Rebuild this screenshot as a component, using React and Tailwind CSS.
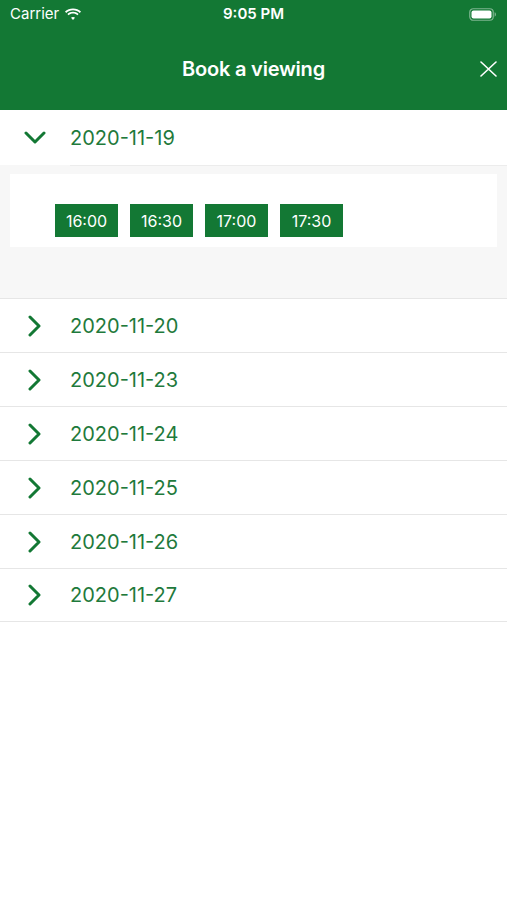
const slots = ["16:00", "16:30", "17:00", "17:30"];
const dates = ["2020-11-20", "2020-11-23", "2020-11-24", "2020-11-25", "2020-11-26", "2020-11-27"];

const Wifi = () => (
  <svg width="18" height="13" viewBox="0 0 18 13" fill="white">
    <path d="M9 2.2c2.6 0 5 1 6.8 2.7l1.2-1.3C14.9 1.6 12.1.4 9 .4S3.1 1.6 1 3.6l1.2 1.3C4 3.2 6.4 2.2 9 2.2z" />
    <path d="M9 5.6c1.7 0 3.2.6 4.4 1.7l1.2-1.3C13.1 4.6 11.1 3.8 9 3.8S4.9 4.6 3.4 6l1.2 1.3C5.8 6.2 7.3 5.6 9 5.6z" />
    <path d="M9 8.9c.8 0 1.5.3 2 .8L9 12 7 9.7c.5-.5 1.2-.8 2-.8z" />
  </svg>
);

const Battery = () => (
  <svg width="28" height="13" viewBox="0 0 28 13">
    <rect x="0.75" y="0.75" width="23.5" height="11.5" rx="3.5" fill="none" stroke="rgba(255,255,255,0.45)" strokeWidth="1.2" />
    <rect x="2.5" y="2.5" width="20" height="8" rx="2" fill="white" />
    <path d="M25.6 4.3v4.4c.9-.3 1.4-1.2 1.4-2.2s-.5-1.9-1.4-2.2z" fill="rgba(255,255,255,0.45)" />
  </svg>
);

const Close = () => (
  <svg width="17" height="16" viewBox="0 0 17 16" className="absolute right-[10px] top-[33px]">
    <path d="M1 1l15 14M16 1L1 15" stroke="white" strokeWidth="1.6" strokeLinecap="round" fill="none" />
  </svg>
);

const ChevDown = () => (
  <svg width="22" height="14" viewBox="0 0 22 14">
    <path d="M2 2l9 9 9-9" stroke="#137834" strokeWidth="3" strokeLinecap="round" strokeLinejoin="round" fill="none" />
  </svg>
);

const ChevRight = () => (
  <svg width="14" height="22" viewBox="0 0 14 22">
    <path d="M2 2l9 9-9 9" stroke="#137834" strokeWidth="3" strokeLinecap="round" strokeLinejoin="round" fill="none" />
  </svg>
);

export default function App() {
  return (
    <div className="w-[507px] h-[900px] bg-white flex flex-col" style={{ fontFamily: "Inter, 'Liberation Sans', sans-serif" }}>
      {/* header */}
      <div className="bg-[#137834] h-[110px] flex flex-col text-white">
        <div className="h-[28px] flex items-center justify-between px-[10px]">
          <div className="flex items-center gap-[5px] w-[120px] text-[15px]">
            <span>Carrier</span>
            <Wifi />
          </div>
          <span className="text-[15px] font-semibold">9:05 PM</span>
          <div className="w-[120px] flex justify-end">
            <Battery />
          </div>
        </div>
        <div className="flex-1 flex items-center justify-center relative">
          <span className="text-[20px] font-semibold tracking-[-0.2px]">Book a viewing</span>
          <Close />
        </div>
      </div>

      {/* expanded */}
      <div className="h-[55px] flex items-center">
        <div className="w-[70px] pl-[24px] flex">
          <ChevDown />
        </div>
        <span className="text-[20px] text-[#1f7a3c]">2020-11-19</span>
      </div>
      <div className="bg-[#f7f7f7] h-[133px] flex flex-col">
        <div className="h-px ml-[70px] bg-[#ececec]" />
        <div className="mx-[10px] mt-[8px] h-[73px] bg-white flex items-end gap-[12px] pl-[45px] pb-[10px]">
          {slots.map((s) => (
            <div key={s} className="w-[63px] h-[33px] bg-[#137834] text-white text-[16px] flex items-center justify-center">
              {s}
            </div>
          ))}
        </div>
      </div>

      {dates.map((d) => (
        <div key={d} className="h-[54px] flex items-center border-t border-[#e6e6e6] last:border-b">
          <div className="w-[70px] pl-[28px] flex">
            <ChevRight />
          </div>
          <span className="text-[20px] text-[#1f7a3c]">{d}</span>
        </div>
      ))}
    </div>
  );
}
